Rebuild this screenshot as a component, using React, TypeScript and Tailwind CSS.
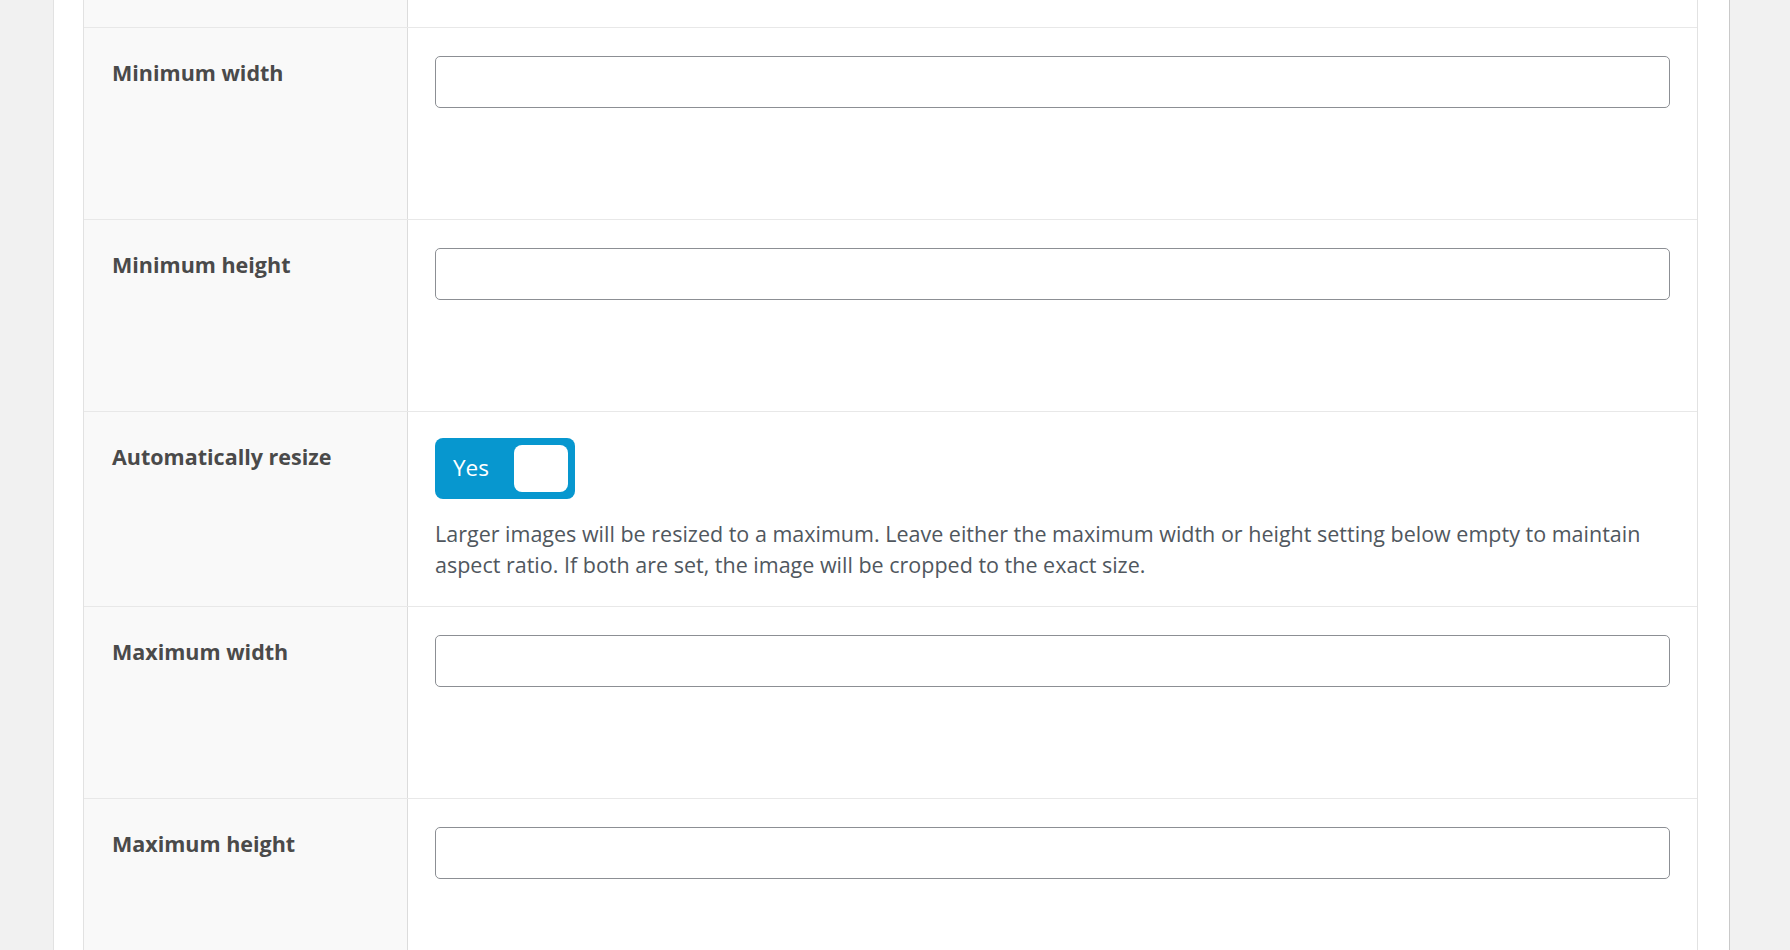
import React from "react";

const font = { fontFamily: '"Open Sans", "Noto Sans", sans-serif' };

function Label({ children }: { children: React.ReactNode }) {
  return (
    <div className="w-[324px] shrink-0 border-r border-[#dcdcdc] bg-[#f9f9f9] pl-[28px] pt-[31px] text-[21.5px] font-bold leading-[28px] text-[#4a4a4a]">
      {children}
    </div>
  );
}

function InputRow({ label }: { label: string }) {
  return (
    <div className="flex h-[192px] border-b border-[#e8e8e8]">
      <Label>{label}</Label>
      <div className="flex-1 pl-[27px] pr-[27px] pt-[28px]">
        <div className="h-[52px] w-full rounded-[5px] border border-[#8c8f94] bg-white" />
      </div>
    </div>
  );
}

export default function App() {
  return (
    <div className="flex h-[950px] w-[1790px] overflow-hidden bg-[#f1f1f1]" style={font}>
      <div className="w-[54px] shrink-0 border-r border-[#e2e2e2]" />
      <div className="w-[1676px] shrink-0 border-r border-[#c9c9c9] bg-white pl-[29px] pr-[31px]">
        <div className="border-x border-[#e2e2e2]">
          <div className="flex h-[28px] border-b border-[#e8e8e8]">
            <div className="w-[324px] shrink-0 border-r border-[#dcdcdc] bg-[#f9f9f9]" />
            <div className="flex-1" />
          </div>
          <InputRow label="Minimum width" />
          <InputRow label="Minimum height" />
          <div className="flex h-[195px] border-b border-[#e8e8e8]">
            <Label>Automatically resize</Label>
            <div className="flex-1 pl-[27px] pr-[27px] pt-[26px]">
              <div className="flex h-[61px] w-[140px] items-center justify-between rounded-[8px] bg-[#0797cf] pl-[18px] pr-[7px]">
                <span className="text-[22.5px] leading-none text-white">Yes</span>
                <div className="h-[47px] w-[54px] rounded-[8px] bg-white" />
              </div>
              <p className="mt-[19px] text-[21.5px] leading-[31px] text-[#50575e]">
                Larger images will be resized to a maximum. Leave either the maximum width or height setting below empty to maintain aspect ratio. If both are set, the image will be cropped to the exact size.
              </p>
            </div>
          </div>
          <InputRow label="Maximum width" />
          <InputRow label="Maximum height" />
        </div>
      </div>
      <div className="flex-1" />
    </div>
  );
}
